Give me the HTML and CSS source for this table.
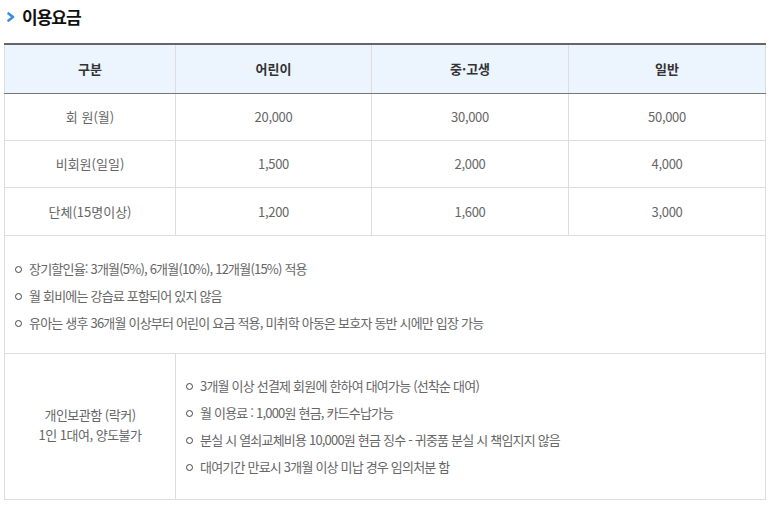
FILE: index.html
```html
<!DOCTYPE html>
<html lang="ko">
<head>
<meta charset="utf-8">
<link rel="stylesheet" href="styles.css">
</head>
<body>
<div class="page">
  <h2 class="title">
    <svg class="title-icon" width="8" height="10" viewBox="0 0 8 10"><path d="M1.5 1.5 L6 5 L1.5 8.5" fill="none" stroke="#3d8be0" stroke-width="2.6" stroke-linecap="round" stroke-linejoin="round"/></svg>
    <span>이용요금</span>
  </h2>
  <table class="fee">
    <colgroup>
      <col class="c1"><col class="c2"><col class="c3"><col class="c4">
    </colgroup>
    <thead>
      <tr><th>구분</th><th>어린이</th><th>중·고생</th><th>일반</th></tr>
    </thead>
    <tbody>
      <tr class="r1"><td>회 원(월)</td><td class="num">20,000</td><td class="num">30,000</td><td class="num">50,000</td></tr>
      <tr class="r2"><td>비회원(일일)</td><td class="num">1,500</td><td class="num">2,000</td><td class="num">4,000</td></tr>
      <tr class="r3"><td>단체(15명이상)</td><td class="num">1,200</td><td class="num">1,600</td><td class="num">3,000</td></tr>
      <tr class="notes">
        <td colspan="4">
          <ul class="list">
            <li>장기할인율: 3개월(5%), 6개월(10%), 12개월(15%) 적용</li>
            <li>월 회비에는 강습료 포함되어 있지 않음</li>
            <li>유아는 생후 36개월 이상부터 어린이 요금 적용, 미취학 아동은 보호자 동반 시에만 입장 가능</li>
          </ul>
        </td>
      </tr>
      <tr class="locker">
        <td class="locker-head">개인보관함 (락커)<br>1인 1대여, 양도불가</td>
        <td colspan="3">
          <ul class="list">
            <li>3개월 이상 선결제 회원에 한하여 대여가능 (선착순 대여)</li>
            <li>월 이용료 : 1,000원 현금, 카드수납가능</li>
            <li>분실 시 열쇠교체비용 10,000원 현금 징수 - 귀중품 분실 시 책임지지 않음</li>
            <li>대여기간 만료시 3개월 이상 미납 경우 임의처분 함</li>
          </ul>
        </td>
      </tr>
    </tbody>
  </table>
</div>
</body>
</html>
```

FILE: styles.css
```css
* { box-sizing: border-box; }
html, body { margin: 0; padding: 0; background: #fff; }
body {
  font-family: "Noto Sans CJK KR", "Noto Sans", sans-serif;
  color: #666;
}
.page { padding: 0 8px 0 4px; }
.title {
  margin: 0;
  height: 43px;
  display: flex;
  align-items: flex-start;
  gap: 7px;
  padding: 5px 0 0 3px;
  font-size: 17px;
  font-weight: 700;
  color: #111;
  line-height: 24px;
  letter-spacing: -1px;
}
.title-icon { margin-top: 7px; }
.fee {
  width: 761px;
  border-collapse: collapse;
  table-layout: fixed;
  border-top: 2px solid #666;
  font-size: 13px;
}
.c1 { width: 171px; }
.c2 { width: 196px; }
.c3 { width: 197px; }
.c4 { width: 197px; }
.fee th, .fee td {
  border: 1px solid #ddd;
  text-align: center;
  vertical-align: middle;
  padding: 0;
}
.fee thead th {
  background: #ecf4fd;
  color: #333;
  font-weight: 700;
  height: 49px;
  border-bottom: 1px solid #777;
  border-top: none;
}
.r1 td { height: 47px; }
.r2 td { height: 47px; }
.r3 td { height: 48px; }
.num { letter-spacing: -0.3px; }
.notes td { text-align: left; padding: 19px 0 17px 0; }
.locker td { padding: 18px 0 19px 0; }
.locker td.locker-head { text-align: center; line-height: 20px; padding: 0 0 3px 0; letter-spacing: -0.5px; }
.locker td:last-child { text-align: left; }
.list { list-style: none; margin: 0; padding: 0 0 0 9px; }
.list li {
  position: relative;
  line-height: 27px;
  padding-left: 15px;
  letter-spacing: -0.8px;
}
.list li::before {
  content: "";
  position: absolute;
  left: 1px;
  top: 11px;
  width: 5px;
  height: 5px;
  border: 1px solid #444;
  border-radius: 50%;
}
```
